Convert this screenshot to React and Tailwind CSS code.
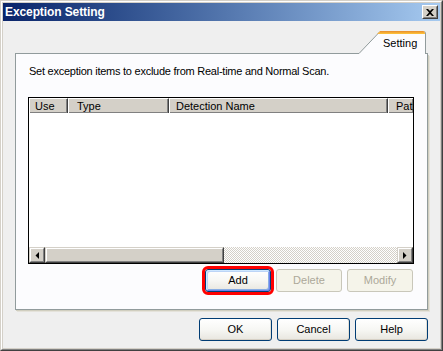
import React from "react";

function XpButton({ children, focused, disabled, className = "" }) {
  let cls =
    "flex items-center justify-center rounded-[3px] border leading-[13px] text-[11px] ";
  if (disabled) {
    cls += "border-[#c9c7ba] bg-[#f5f4ea] text-[#aca899] ";
  } else {
    cls +=
      "border-[#003c74] bg-linear-to-b from-white via-[#f7f7f4] to-[#e8e6df] text-black ";
    if (focused) {
      cls +=
        "shadow-[inset_1px_1px_0_#cee7ff,inset_-1px_-1px_0_#6982ee,inset_2px_2px_0_#bcd4f6,inset_-2px_-2px_0_#89ade4] ";
    } else {
      cls += "shadow-[inset_0_-1px_0_#d6d0c5,inset_-1px_0_0_#e3e0d6] ";
    }
  }
  return <div className={cls + className}>{children}</div>;
}

function ScrollBtn({ dir }) {
  return (
    <div className="w-[16px] h-[16px] border border-t-[#d4d0c8] border-l-[#d4d0c8] border-r-[#404040] border-b-[#404040]">
      <div className="w-full h-full bg-[#d4d0c8] border border-t-white border-l-white border-r-[#808080] border-b-[#808080] flex items-center justify-center">
        <svg width="4" height="7" viewBox="0 0 4 7">
          {dir === "left" ? (
            <polygon points="4,0 4,7 0.5,3.5" fill="#000" />
          ) : (
            <polygon points="0,0 0,7 3.5,3.5" fill="#000" />
          )}
        </svg>
      </div>
    </div>
  );
}

function HeaderCell({ children, className = "" }) {
  return (
    <div
      className={
        "h-full flex items-center overflow-hidden whitespace-nowrap bg-[#d4d0c8] border-t border-l border-t-white border-l-white border-r border-r-[#404040] shadow-[inset_-1px_-1px_0_#808080] leading-[13px] " +
        className
      }
    >
      {children}
    </div>
  );
}

export default function App() {
  return (
    <div className="w-[443px] h-[351px] font-['Liberation_Sans',Arial,sans-serif] text-[11px] text-black">
      <div className="w-full h-full border border-t-[#d4d0c8] border-l-[#d4d0c8] border-r-[#404040] border-b-[#404040] bg-[#d4d0c8]">
        <div className="w-full h-full border border-t-white border-l-white border-r-[#808080] border-b-[#808080] p-px flex flex-col">
          {/* Title bar */}
          <div className="h-[18px] shrink-0 flex items-center justify-between pl-[2px] pr-[2px] bg-linear-to-r from-[#0a246a] to-[#a6caf0]">
            <span className="text-white font-bold text-[12px] leading-[14px] tracking-[-0.1px]">
              Exception Setting
            </span>
            <div className="w-[16px] h-[14px] border border-t-white border-l-white border-r-[#404040] border-b-[#404040]">
              <div className="w-full h-full bg-[#d4d0c8] border border-t-[#d4d0c8] border-l-[#d4d0c8] border-r-[#808080] border-b-[#808080] flex items-center justify-center">
                <svg width="8" height="7" viewBox="0 0 8 7">
                  <path
                    d="M0 0h2l2 2 2-2h2L5 3.5 8 7H6L4 5 2 7H0l3-3.5z"
                    fill="#000"
                  />
                </svg>
              </div>
            </div>
          </div>

          {/* Body */}
          <div className="flex-1 bg-[#efefef] pt-[10px] px-[12px] flex flex-col">
            {/* Tab row */}
            <div className="h-[23px] flex items-end shrink-0">
              <div className="flex-1 h-px bg-[#919b9c]" />
              <svg width="21" height="23" viewBox="0 0 21 23" className="block">
                <polygon points="0,23 21,0 21,23" fill="#fcfcfe" />
                <line x1="0" y1="22.5" x2="21" y2="0.5" stroke="#919b9c" strokeWidth="1" />
                <polygon points="20,1 21,0 21,3 18,3" fill="#f4b64a" />
              </svg>
              <div className="w-[46px] h-[23px] flex flex-col bg-[#fcfcfe] border-r border-[#919b9c] rounded-tr-[3px] overflow-hidden">
                <div className="h-[3px] bg-linear-to-b from-[#e68b2c] to-[#ffc73c]" />
                <div className="pl-[3px] pt-[3px] leading-[13px]">Setting</div>
              </div>
              <div className="w-[2px] h-px bg-[#919b9c]" />
            </div>

            {/* Panel */}
            <div className="h-[256px] shrink-0 border-x border-b border-[#919b9c] bg-[#fcfcfe] shadow-[1px_1px_0_#d0cebf,2px_2px_0_#e4e2da] pl-[12px] pt-[11px] flex flex-col">
              <p className="ml-px leading-[13px] whitespace-nowrap tracking-[-0.25px]">
                Set exception items to exclude from Real-time and Normal Scan.
              </p>

              {/* List view */}
              <div className="mt-[19px] w-[386px] h-[167px] border border-black bg-white flex flex-col">
                <div className="h-[15px] flex shrink-0">
                  <HeaderCell className="w-[39px] pl-[5px]">Use</HeaderCell>
                  <HeaderCell className="w-[101px] pl-[8px]">Type</HeaderCell>
                  <HeaderCell className="w-[219px] pl-[6px]">Detection Name</HeaderCell>
                  <HeaderCell className="flex-1 pl-[7px] border-r-0">Path</HeaderCell>
                </div>
                <div className="flex-1 bg-white" />
                <div className="h-[16px] flex shrink-0">
                  <ScrollBtn dir="left" />
                  <div className="w-[179px] h-[16px] border border-t-[#d4d0c8] border-l-[#d4d0c8] border-r-[#404040] border-b-[#404040]">
                    <div className="w-full h-full bg-[#d4d0c8] border border-t-white border-l-white border-r-[#808080] border-b-[#808080]" />
                  </div>
                  <div className="flex-1 h-[16px] bg-[image:repeating-conic-gradient(#d4d0c8_0_25%,#ffffff_0_50%)] bg-[length:2px_2px]" />
                  <ScrollBtn dir="right" />
                </div>
              </div>

              {/* List buttons */}
              <div className="mt-[5px] w-[386px] pr-px flex justify-end gap-[5px]">
                <XpButton
                  focused
                  className="w-[66px] h-[23px] outline-[3px] outline-solid outline-[#ff0000]"
                >
                  Add
                </XpButton>
                <XpButton disabled className="w-[66px] h-[23px]">
                  Delete
                </XpButton>
                <XpButton disabled className="w-[66px] h-[23px]">
                  Modify
                </XpButton>
              </div>
            </div>

            {/* Dialog buttons */}
            <div className="mt-[8px] flex justify-end gap-[5px]">
              <XpButton className="w-[73px] h-[23px]">OK</XpButton>
              <XpButton className="w-[73px] h-[23px]">Cancel</XpButton>
              <XpButton className="w-[73px] h-[23px]">Help</XpButton>
            </div>
          </div>
        </div>
      </div>
    </div>
  );
}
